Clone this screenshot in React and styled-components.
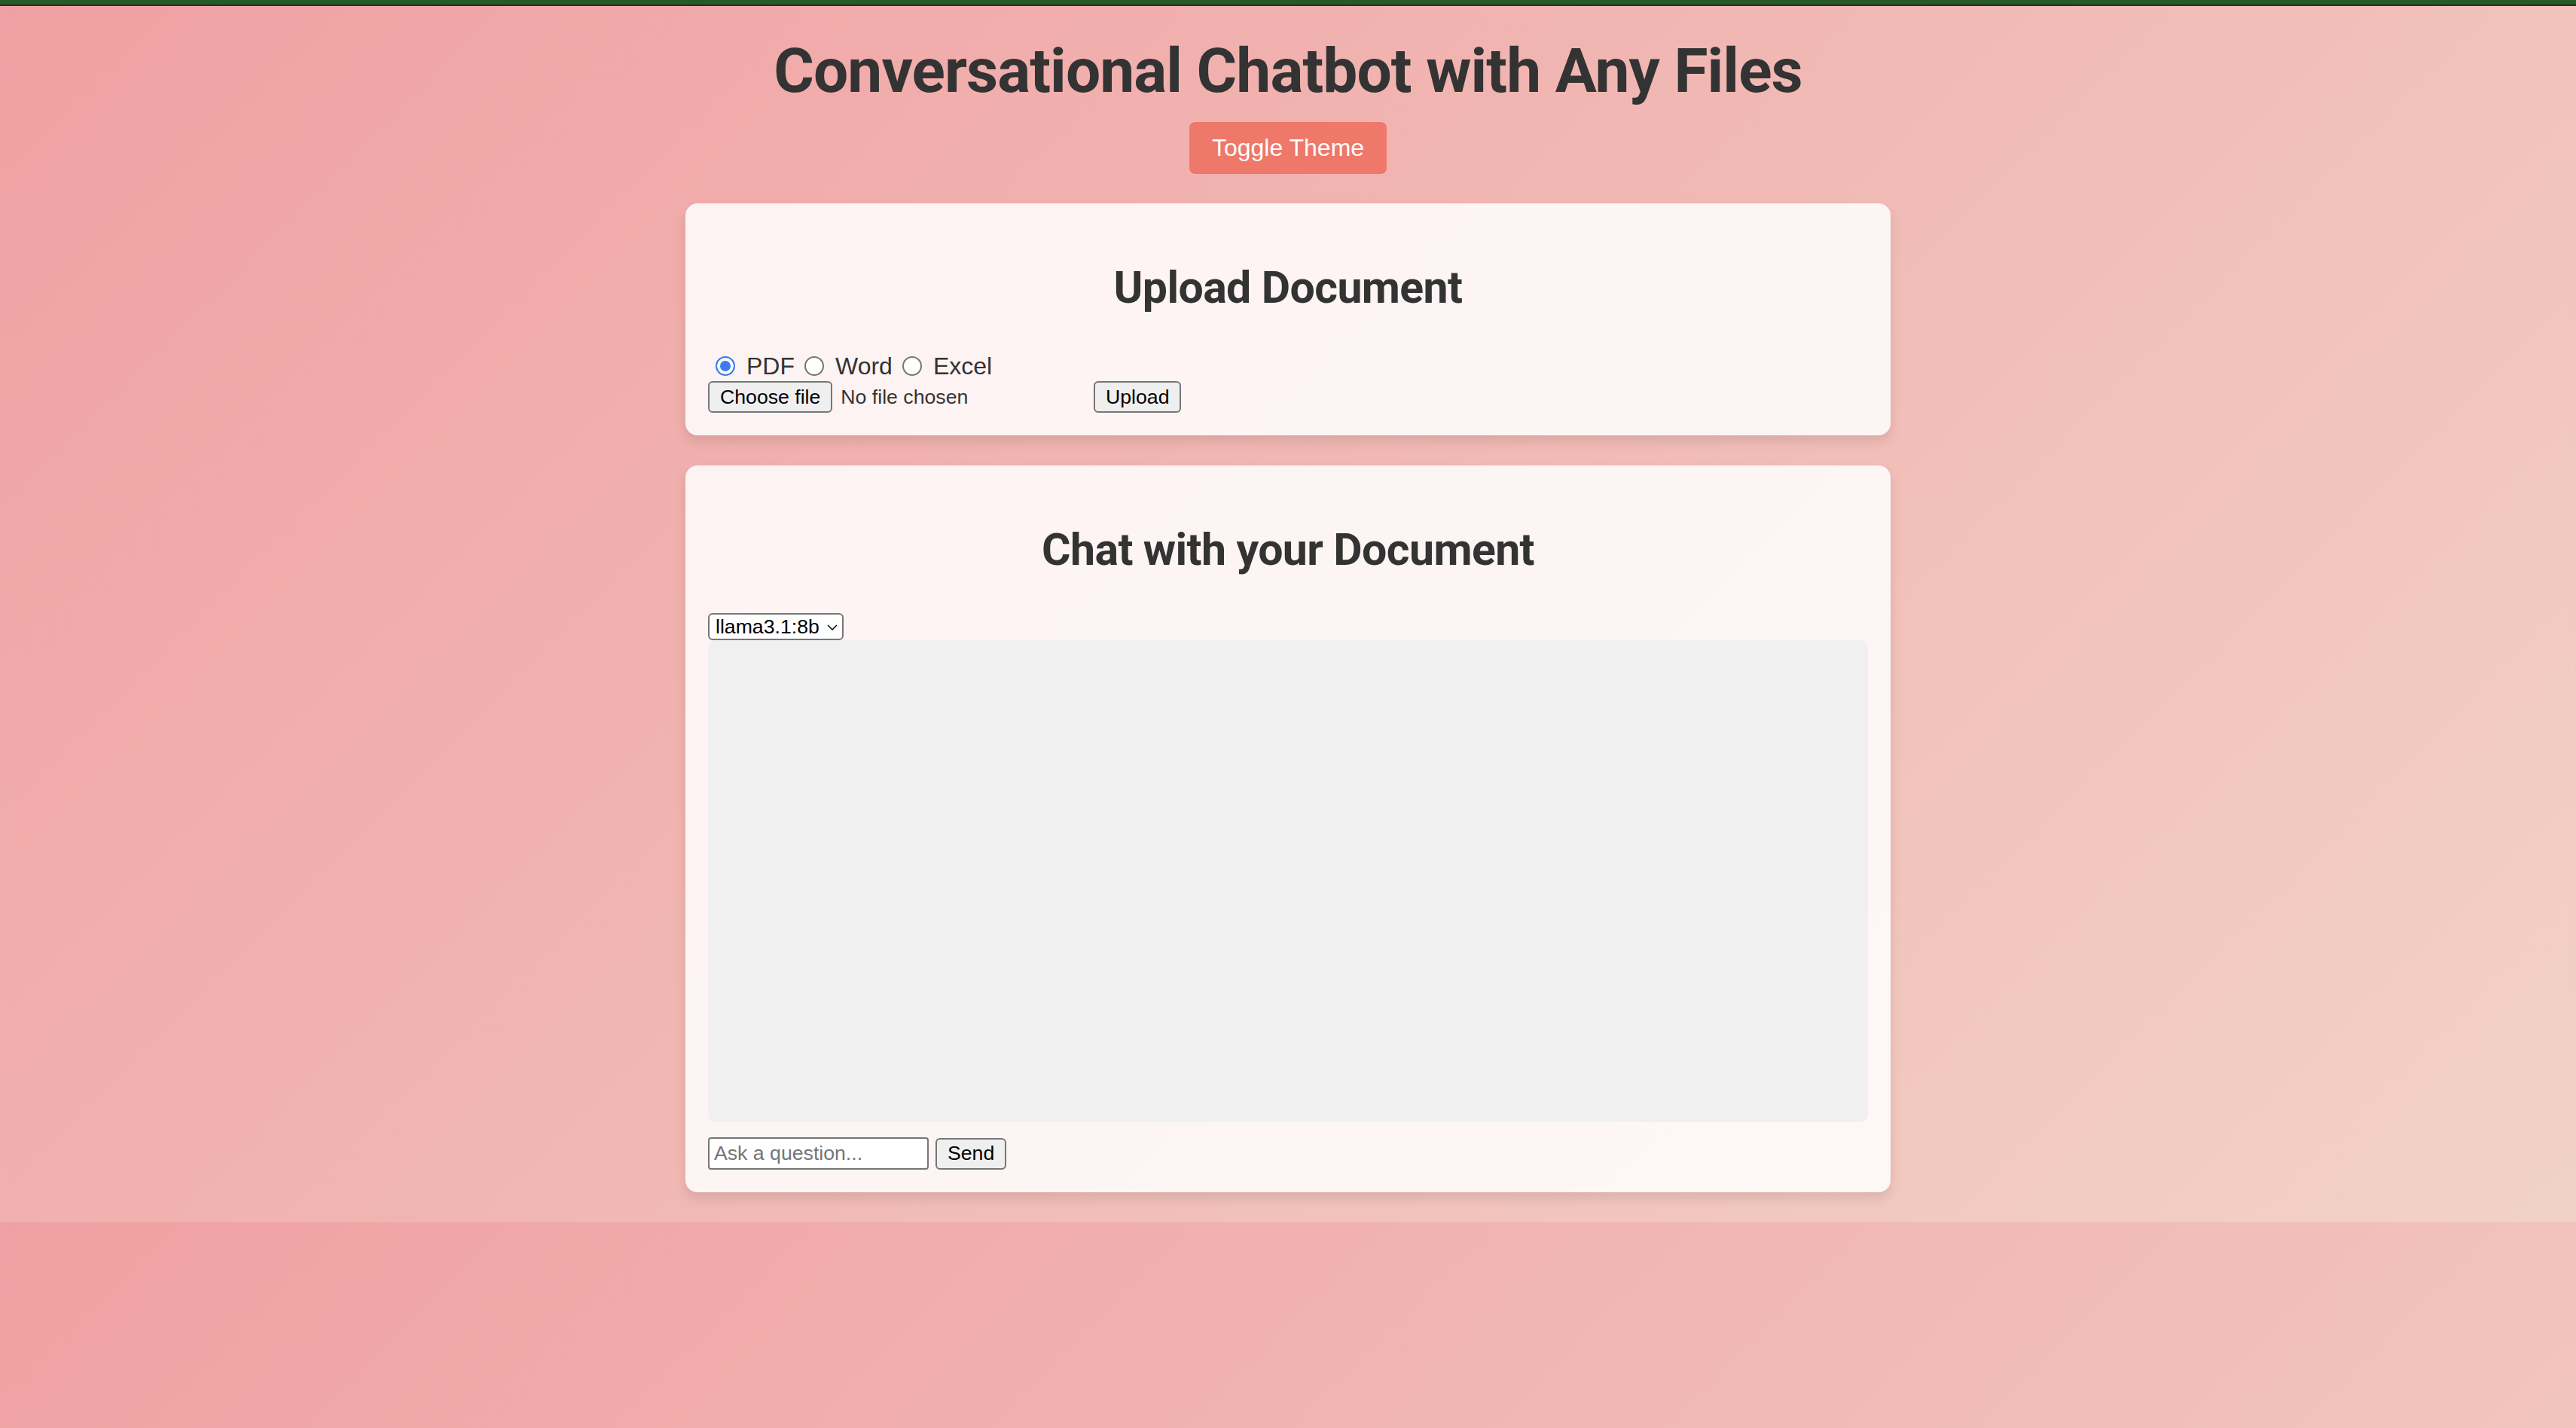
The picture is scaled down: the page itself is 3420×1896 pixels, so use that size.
import React, {useState} from 'react';
import styled, {createGlobalStyle, css} from 'styled-components';

// Page background tiles with the root box, like the original page
const GlobalStyle = createGlobalStyle`
    body {
        margin: 0;
        font-family: "Liberation Sans", Arial, sans-serif;
        color: #333;
        background: linear-gradient(135deg, #f0a0a2 0%, #f2d2c6 100%);
    }
    * {
        box-sizing: border-box;
    }
`;

const App = () => {
    const [docType, setDocType] = useState('pdf');
    const [model, setModel] = useState('llama3.1:8b');
    const [question, setQuestion] = useState('');

    const types = [
        {value: 'pdf', label: 'PDF'},
        {value: 'word', label: 'Word'},
        {value: 'excel', label: 'Excel'},
    ];

    return(
        <>
        <GlobalStyle/>
        <TopStrip/>
        <Main>
            <Title>Conversational Chatbot with Any Files</Title>
            <ToggleButton>Toggle Theme</ToggleButton>

            <Card>
                <CardTitle>Upload Document</CardTitle>
                <RadioRow>
                    {types.map((t) => (
                        <Option key={t.value}>
                            <Radio
                                type="radio"
                                name="doctype"
                                value={t.value}
                                checked={docType === t.value}
                                onChange={() => setDocType(t.value)}
                            />
                            {t.label}
                        </Option>
                    ))}
                </RadioRow>
                <FileRow>
                    <FilePicker>
                        <FileButton as="label">
                            Choose file
                            <HiddenInput type="file"/>
                        </FileButton>
                        <FileName>No file chosen</FileName>
                    </FilePicker>
                    <NativeButton>Upload</NativeButton>
                </FileRow>
            </Card>

            <Card>
                <CardTitle>Chat with your Document</CardTitle>
                <SelectWrap>
                    <ModelSelect value={model} onChange={(e) => setModel(e.target.value)}>
                        <option value="llama3.1:8b">llama3.1:8b</option>
                        <option value="mistral">mistral</option>
                    </ModelSelect>
                    <Chevron width="14" height="8" viewBox="0 0 14 8">
                        <path d="M1 1 L7 7 L13 1" fill="none" stroke="#111" strokeWidth="1.6"/>
                    </Chevron>
                </SelectWrap>
                <ChatWindow/>
                <InputRow>
                    <QuestionInput
                        placeholder="Ask a question..."
                        value={question}
                        onChange={(e) => setQuestion(e.target.value)}
                    />
                    <NativeButton>Send</NativeButton>
                </InputRow>
            </Card>
        </Main>
        </>
    )
};

const controlFont = css`
    font-family: "Liberation Sans", Arial, sans-serif;
    font-size: 26.67px;
`;

const TopStrip = styled.div`
    height: 8px;
    background: #265b27;
    border-bottom: 2px solid #2b2b2b;
`;
const Main = styled.main`
    display: flex;
    flex-direction: column;
    align-items: center;
    padding-top: 37px;
`;
const Title = styled.h1`
    margin: 0 0 19px;
    font-family: Roboto, "Liberation Sans", sans-serif;
    font-weight: 700;
    font-size: 82px;
    line-height: 98px;
    letter-spacing: -0.9px;
    color: #333;
    text-align: center;
`;
const ToggleButton = styled.button`
    height: 69px;
    padding: 0 30px;
    margin-bottom: 39px;
    border: none;
    border-radius: 8px;
    background: #ee786a;
    color: #fff;
    font-family: "Liberation Sans", Arial, sans-serif;
    font-size: 32px;
    cursor: pointer;
`;
const Card = styled.section`
    width: 1600px;
    padding: 30px;
    margin-bottom: 40px;
    border-radius: 16px;
    background: rgba(255, 255, 255, 0.85);
    box-shadow: 0 8px 16px rgba(0, 0, 0, 0.1);
`;
const CardTitle = styled.h2`
    margin: 46px 0 48px;
    font-family: Roboto, "Liberation Sans", sans-serif;
    font-weight: 700;
    font-size: 59px;
    line-height: 72px;
    letter-spacing: -0.6px;
    color: #333;
    text-align: center;
`;
const RadioRow = styled.div`
    display: flex;
    align-items: center;
    height: 40px;
    font-size: 32px;
`;
const Option = styled.label`
    display: inline-flex;
    align-items: center;
    margin-right: 3px;
`;
const Radio = styled.input`
    appearance: none;
    width: 26px;
    height: 26px;
    margin: 0 15px 0 10px;
    border: 2px solid #767676;
    border-radius: 50%;
    background: #fff;
    &:checked {
        border-color: #3b7cf0;
        background: #3b7cf0;
        box-shadow: inset 0 0 0 4px #fff;
    }
`;
const FileRow = styled.div`
    display: flex;
    align-items: center;
    height: 42px;
`;
const FilePicker = styled.div`
    display: flex;
    align-items: center;
    width: 504px;
    margin-right: 8px;
`;
const NativeButton = styled.button`
    ${controlFont};
    display: inline-flex;
    align-items: center;
    height: 42px;
    padding: 0 14px;
    border: 2px solid #767676;
    border-radius: 6px;
    background: #efefef;
    color: #000;
`;
const FileButton = styled(NativeButton)``;
const HiddenInput = styled.input`
    display: none;
`;
const FileName = styled.span`
    ${controlFont};
    margin-left: 11px;
    color: #333;
`;
const SelectWrap = styled.div`
    position: relative;
    width: 180px;
    height: 36px;
`;
const ModelSelect = styled.select`
    ${controlFont};
    appearance: none;
    width: 100%;
    height: 100%;
    padding: 0 30px 0 8px;
    border: 2px solid #767676;
    border-radius: 6px;
    background: #fff;
    color: #000;
`;
const Chevron = styled.svg`
    position: absolute;
    right: 8px;
    top: 15px;
    pointer-events: none;
`;
const ChatWindow = styled.div`
    height: 640px;
    margin-bottom: 20px;
    border-radius: 10px;
    background: #f0f0f0;
`;
const InputRow = styled.div`
    display: flex;
    align-items: center;
    gap: 9px;
    height: 43px;
`;
const QuestionInput = styled.input`
    ${controlFont};
    width: 293px;
    height: 43px;
    padding: 0 6px;
    border: 2px solid #767676;
    border-radius: 4px;
    background: #fff;
    color: #000;
    &::placeholder {
        color: #757575;
    }
`;

export default App;
